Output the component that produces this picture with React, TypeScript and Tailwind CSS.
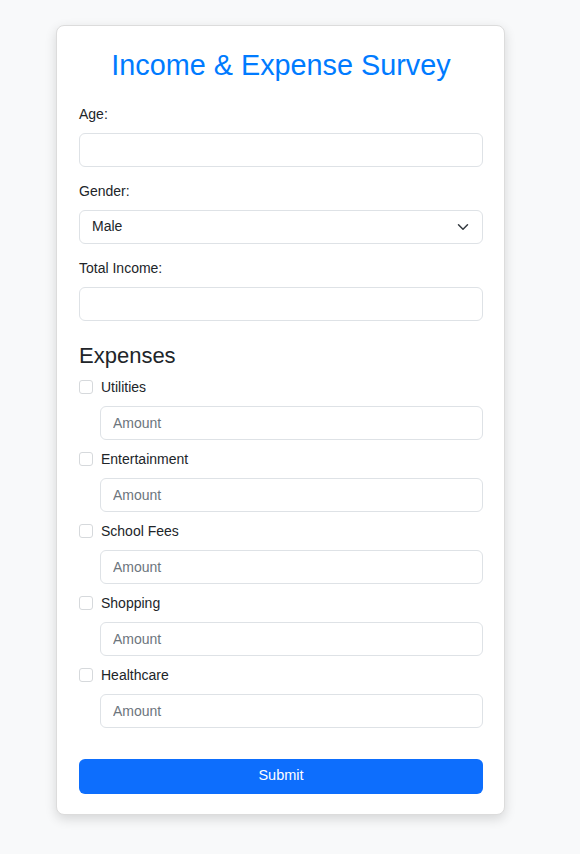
const expenses = ["Utilities", "Entertainment", "School Fees", "Shopping", "Healthcare"];

const inputCls =
  "block w-full h-[34px] px-3 text-[14px] text-[#212529] bg-white border border-[#dee2e6] rounded-[6px] outline-none placeholder:text-[#6c757d]";

function Field({ label, children }: { label: string; children: React.ReactNode }) {
  return (
    <div className="mb-[13px]">
      <label className="block text-[14px] leading-[22px] text-[#212529] mb-2">{label}</label>
      {children}
    </div>
  );
}

export default function App() {
  return (
    <div
      className="min-h-screen bg-[#f8f9fa] pt-[25px] pb-10"
      style={{ fontFamily: '"Liberation Sans", Arial, sans-serif' }}
    >
      <div className="ml-[56px] w-[449px] bg-white border border-[#dcdcdc] rounded-[8px] shadow-[0_4px_12px_rgba(0,0,0,0.14)] pl-[22px] pr-[21px] pt-[22px] pb-5">
        <h1 className="text-center text-[28.8px] leading-[1.2] text-[#007bff] mb-5">
          Income &amp; Expense Survey
        </h1>

        <Field label="Age:">
          <input type="number" className={inputCls} />
        </Field>

        <Field label="Gender:">
          <div className="relative">
            <select className={inputCls + " appearance-none"} defaultValue="Male">
              <option>Male</option>
              <option>Female</option>
              <option>Other</option>
            </select>
            <svg
              className="absolute right-3 top-[11px] w-4 h-3 pointer-events-none"
              viewBox="0 0 16 16"
              fill="none"
              stroke="#343a40"
              strokeWidth="2"
              strokeLinecap="round"
              strokeLinejoin="round"
            >
              <path d="m2 5 6 6 6-6" />
            </svg>
          </div>
        </Field>

        <Field label="Total Income:">
          <input type="number" className={inputCls} />
        </Field>

        <h2 className="text-[22px] leading-[26px] text-[#212529] mt-[22px] mb-[8px]">Expenses</h2>

        {expenses.map((name) => (
          <div key={name}>
            <label className="flex items-center h-[21px] gap-2 text-[14px] text-[#212529]">
              <input
                type="checkbox"
                className="appearance-none w-[14px] h-[14px] border border-[#d6d9dc] rounded-[3px] bg-white shrink-0"
              />
              {name}
            </label>
            <div className="ml-[21px] mt-2 mb-[9px]">
              <input type="number" placeholder="Amount" className={inputCls} />
            </div>
          </div>
        ))}

        <button className="block w-full h-[35px] mt-[31px] bg-[#0d6efd] text-white text-[14.5px] rounded-[6px]">
          Submit
        </button>
      </div>
    </div>
  );
}
